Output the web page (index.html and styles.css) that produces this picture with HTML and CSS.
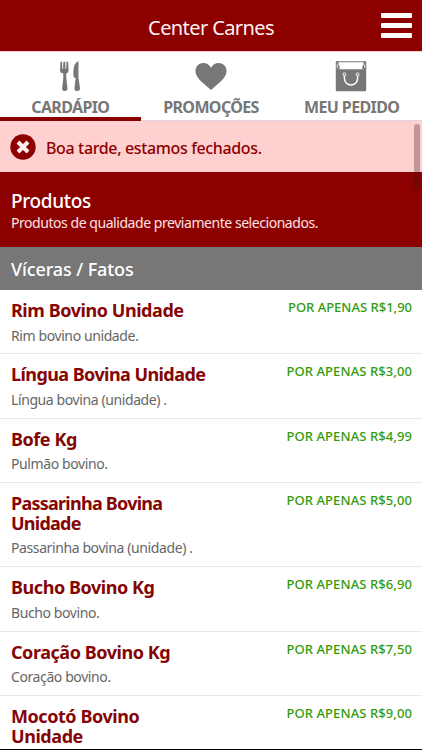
FILE: index.html
```
<!DOCTYPE html>
<html lang="pt-BR">
<head>
<meta charset="utf-8">
<meta name="viewport" content="width=device-width, initial-scale=1">
<title>Center Carnes</title>
<link rel="stylesheet" href="styles.css">
</head>
<body>
<div class="app">
  <header class="topbar">
    <h1>Center Carnes</h1>
    <button class="menu" aria-label="Menu"><span></span><span></span><span></span></button>
  </header>
  <nav class="tabs">
    <a class="tab active">
      <svg width="32" height="32" viewBox="0 0 32 32" fill="currentColor"><path d="M6.500 2q.8-1.200 1.600 0l.3 7h.7l.3-7q.9-1.200 1.800 0l.3 7h.7l.3-7q.8-1.200 1.600 0l.5 8.500q0 2.300-2.300 3v4.500l1.200 10.500q0 2.500-2.700 2.500t-2.700-2.500L9.300 18v-4.500q-3.300-.7-3.300-3z"/><path d="M24.500 1.200v16.300l1.500 11q0 2.500-2.800 2.500t-2.800-2.500l1.200-10.300q-2.200-.4-2.200-2v-5.700q.5-8 5.100-9.300z"/></svg>
      <span class="tab-name">CARDÁPIO</span>
    </a>
    <a class="tab">
      <svg width="32" height="32" viewBox="0 0 32 32" fill="currentColor"><path d="M16 30C9.500 24 .5 18.500 .5 11 .5 6.200 4 3 8.500 3c3 0 6 1.700 7.500 4.700 1.500-3 4.500-4.700 7.500-4.700 4.500 0 8 3.200 8 8C31.500 18.500 22.500 24 16 30z"/></svg>
      <span class="tab-name">PROMOÇÕES</span>
    </a>
    <a class="tab">
      <svg class="bag" width="32" height="32" viewBox="0 0 32 32"><path d="M1.300 1.700h29.400M1.300 1.500v8.500M30.700 1.500v8.500" fill="none" stroke="currentColor" stroke-width="1.100"/><path d="M1.200 1.500h2.200v3.200L4.600 6v3.500H1.200L3 6.500zM30.800 1.500h-2.200v3.200L27.400 6v3.500h3.400L29 6.500z" fill="currentColor"/><rect x=".8" y="9.300" width="30.400" height="22" rx="1.300" fill="currentColor"/><path d="M9.400 15v3.200c0 9 13.200 9 13.200 0V15" fill="none" stroke="#fff" stroke-width="1.500"/><g fill="currentColor" stroke="#fff" stroke-width="1"><circle cx="9.400" cy="14.300" r="1.400"/><circle cx="22.600" cy="14.300" r="1.400"/></g></svg>
      <span class="tab-name">MEU PEDIDO</span>
    </a>
  </nav>
  <main class="content">
    <div class="notice">
      <svg width="26" height="26" viewBox="0 0 26 26"><circle cx="13" cy="13" r="12.700" fill="#8d0000"/><path d="M8 8l10 10M18 8L8 18" stroke="#ffeded" stroke-width="4"/></svg>
      <span>Boa tarde, estamos fechados.</span>
    </div>
    <section class="intro">
      <h2>Produtos</h2>
      <p>Produtos de qualidade previamente selecionados.</p>
    </section>
    <h3 class="group">Víceras / Fatos</h3>
    <ul class="list">
      <li class="item"><div class="info"><h4>Rim Bovino Unidade</h4><p>Rim bovino unidade.</p></div><span class="price narrow">POR APENAS R$1,90</span></li>
      <li class="item"><div class="info"><h4 class="snug">Língua Bovina Unidade</h4><p>Língua bovina (unidade) .</p></div><span class="price">POR APENAS R$3,00</span></li>
      <li class="item"><div class="info"><h4>Bofe Kg</h4><p>Pulmão bovino.</p></div><span class="price">POR APENAS R$4,99</span></li>
      <li class="item tall"><div class="info"><h4 class="tight">Passarinha Bovina<br>Unidade</h4><p>Passarinha bovina (unidade) .</p></div><span class="price">POR APENAS R$5,00</span></li>
      <li class="item"><div class="info"><h4>Bucho Bovino Kg</h4><p>Bucho bovino.</p></div><span class="price">POR APENAS R$6,90</span></li>
      <li class="item"><div class="info"><h4>Coração Bovino Kg</h4><p>Coração bovino.</p></div><span class="price">POR APENAS R$7,50</span></li>
      <li class="item tall"><div class="info"><h4>Mocotó Bovino<br>Unidade</h4></div><span class="price">POR APENAS R$9,00</span></li>
    </ul>
    <div class="scroll-thumb"></div>
  </main>
</div>
</body>
</html>
```
FILE: styles.css
```
* { box-sizing: border-box; }
body, h1, h2, h3, h4, p, ul { margin: 0; padding: 0; }
body {
  background: #fff;
  font-family: "Noto Sans", "Open Sans", sans-serif;
  overflow: hidden;
}
.app {
  display: flex;
  flex-direction: column;
  height: 750px;
  overflow: hidden;
  border-bottom: 1px solid #000;
}
.topbar {
  flex: none;
  display: grid;
  grid-template-columns: 1fr auto 1fr;
  align-items: center;
  height: 51px;
  padding: 4px 10px 0;
  background: #8d0000;
}
.topbar h1 {
  grid-column: 2;
  color: #fff0f0;
  font-size: 20px;
  line-height: 28px;
  font-weight: 400;
  letter-spacing: -0.6px;
}
.menu {
  justify-self: end;
  display: flex;
  flex-direction: column;
  gap: 5px;
  width: 31px;
  padding: 0;
  border: 0;
  background: none;
  margin-bottom: 4px;
}
.menu span { height: 5px; border-radius: 1px; background: #fff; }
.tabs {
  flex: none;
  display: grid;
  grid-template-columns: repeat(3, 1fr);
  height: 70px;
  border-top: 1px solid #ffd0d0;
  border-bottom: 1px solid #ddd6dc;
  color: #777;
}
.tab {
  display: flex;
  flex-direction: column;
  align-items: center;
  padding-top: 8px;
  height: 69px;
}
.tab.active { border-bottom: 4px solid #8d0000; }
.tab svg { flex: none; }
.tab .bag { margin-right: 1px; }
.tab-name {
  margin-top: 3px;
  font-size: 16px;
  line-height: 24px;
  font-weight: 700;
  letter-spacing: -0.62px;
  white-space: nowrap;
}
.content { position: relative; flex: 1; min-height: 0; overflow: hidden; }
.notice {
  display: flex;
  align-items: center;
  gap: 10px;
  height: 51px;
  padding: 1px 10px 0;
  background: #ffd0d0;
  color: #8d0000;
  font-size: 16px;
  font-weight: 500;
  letter-spacing: -0.36px;
}
.notice span { padding-top: 2px; }
.intro {
  height: 75px;
  padding: 18px 11px 0;
  background: #8d0000;
  color: #fff;
}
.intro h2 { font-size: 19px; line-height: 23px; font-weight: 500; letter-spacing: -0.35px; }
.intro p { color: #ffe2e2; font-size: 14px; line-height: 20px; letter-spacing: -0.45px; }
.group {
  height: 43px;
  padding: 0 11px;
  background: #777;
  color: #fff;
  font-size: 18px;
  line-height: 45px;
  font-weight: 500;
  letter-spacing: -0.1px;
}
.list { list-style: none; }
.item {
  display: flex;
  justify-content: space-between;
  height: 64.4px;
  padding: 11px 10px 0 11px;
  border-bottom: 1.500px solid #e9e9e9;
}
.item.tall { height: 84.3px; }
.item h4 {
  color: #850505;
  font-size: 18px;
  line-height: 19.600px;
  font-weight: 700;
  letter-spacing: -0.44px;
  white-space: nowrap;
}
.item .snug { letter-spacing: -0.57px; }
.item .tight { letter-spacing: -0.75px; }
.item p { margin-top: 5px; color: #666; font-size: 14px; line-height: 20px; letter-spacing: -0.4px; }
.price {
  color: #339b0d;
  font-size: 13px;
  line-height: 13px;
  font-weight: 500;
  letter-spacing: 0.09px;
  white-space: nowrap;
}
.price.narrow { letter-spacing: 0; }
.scroll-thumb {
  position: absolute;
  top: 3px;
  right: 2px;
  width: 6px;
  height: 66px;
  border-radius: 3px;
  background: rgba(60, 20, 20, 0.3);
}
```
